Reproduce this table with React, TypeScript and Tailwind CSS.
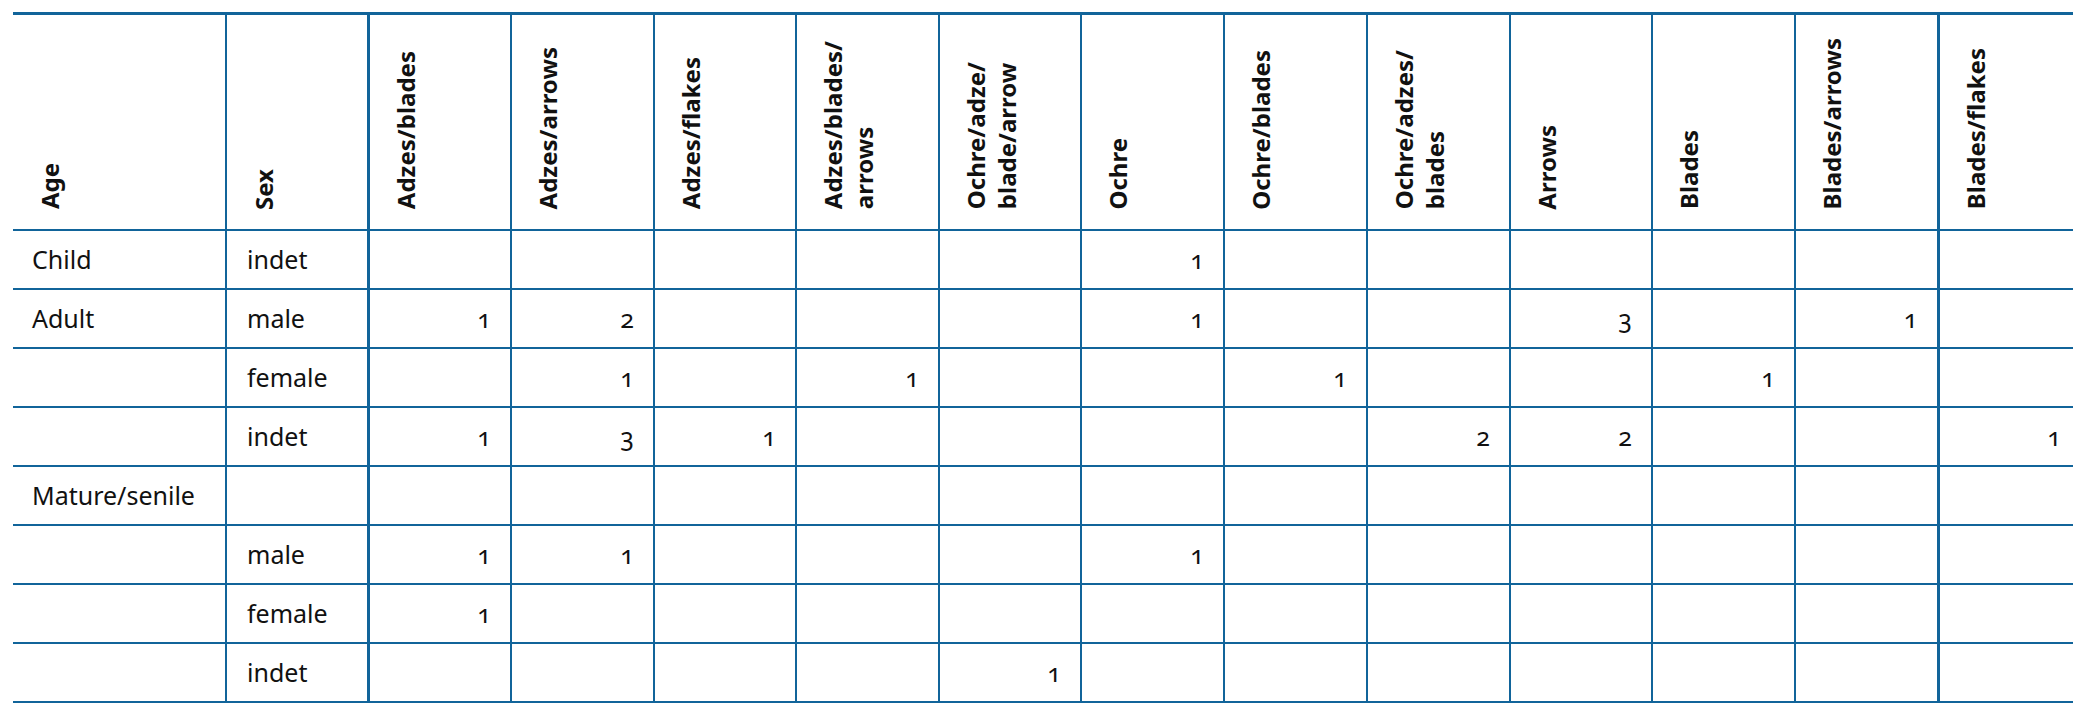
import React from 'react';

const columns: string[][] = [
  ['Adzes/blades'],
  ['Adzes/arrows'],
  ['Adzes/flakes'],
  ['Adzes/blades/', 'arrows'],
  ['Ochre/adze/', 'blade/arrow'],
  ['Ochre'],
  ['Ochre/blades'],
  ['Ochre/adzes/', 'blades'],
  ['Arrows'],
  ['Blades'],
  ['Blades/arrows'],
  ['Blades/flakes'],
];

const widths = [143, 143, 142, 143, 142, 143, 143, 143, 142, 143, 143, 143];

type Row = { age: string; sex: string; counts: Record<number, number> };

const rows: Row[] = [
  { age: 'Child', sex: 'indet', counts: { 5: 1 } },
  { age: 'Adult', sex: 'male', counts: { 0: 1, 1: 2, 5: 1, 8: 3, 10: 1 } },
  { age: '', sex: 'female', counts: { 1: 1, 3: 1, 6: 1, 9: 1 } },
  { age: '', sex: 'indet', counts: { 0: 1, 1: 3, 2: 1, 7: 2, 8: 2, 11: 1 } },
  { age: 'Mature/senile', sex: '', counts: {} },
  { age: '', sex: 'male', counts: { 0: 1, 1: 1, 5: 1 } },
  { age: '', sex: 'female', counts: { 0: 1 } },
  { age: '', sex: 'indet', counts: { 4: 1 } },
];

function HeaderLabel({ lines }: { lines: string[] }) {
  return (
    <div className="[writing-mode:vertical-rl] rotate-180 whitespace-nowrap text-[24px] font-bold leading-[31px] text-[#111]">
      {lines.map((l, i) => (
        <React.Fragment key={i}>
          {i > 0 && <br />}
          {l}
        </React.Fragment>
      ))}
    </div>
  );
}

export default function App() {
  return (
    <div className="w-[2073px] h-[707px] overflow-hidden bg-white pt-[12px] pl-[13px] font-['Noto_Sans','Open_Sans',sans-serif] text-[#111]">
      <table className="table-fixed border-collapse w-[2068px] min-w-[2068px]">
        <colgroup>
          <col className="w-[213px]" />
          <col className="w-[142px]" />
          {widths.map((w, i) => (
            <col key={i} style={{ width: w }} />
          ))}
        </colgroup>
        <thead>
          <tr className="h-[216px] border-t-[3px] border-b-2 border-[#11649a]">
            <th className="align-bottom text-left pl-[21px] pb-[19px] border-r-2 border-[#11649a]">
              <HeaderLabel lines={['Age']} />
            </th>
            <th className="align-bottom text-left pl-[21px] pb-[19px] border-r-[3px] border-[#11649a]">
              <HeaderLabel lines={['Sex']} />
            </th>
            {columns.map((c, i) => (
              <th
                key={i}
                className={
                  'align-bottom text-left pl-[20px] pb-[19px] border-[#11649a] ' +
                  (i === 10 ? 'border-r-[3px]' : 'border-r-2')
                }
              >
                <HeaderLabel lines={c} />
              </th>
            ))}
          </tr>
        </thead>
        <tbody>
          {rows.map((r, ri) => (
            <tr key={ri} className="h-[59px] border-b-2 border-[#11649a] text-[25px] leading-normal">
              <td className="pl-[19px] pt-[2px] border-r-2 border-[#11649a]">{r.age}</td>
              <td className="pl-[20px] pt-[2px] border-r-[3px] border-[#11649a]">{r.sex}</td>
              {columns.map((_, ci) => (
                <td
                  key={ci}
                  className={
                    'text-right pr-[19px] pt-[2px] oldstyle-nums border-[#11649a] ' +
                    (ci === 10 ? 'border-r-[3px]' : 'border-r-2')
                  }
                >
                  {r.counts[ci] ?? ''}
                </td>
              ))}
            </tr>
          ))}
        </tbody>
      </table>
    </div>
  );
}
